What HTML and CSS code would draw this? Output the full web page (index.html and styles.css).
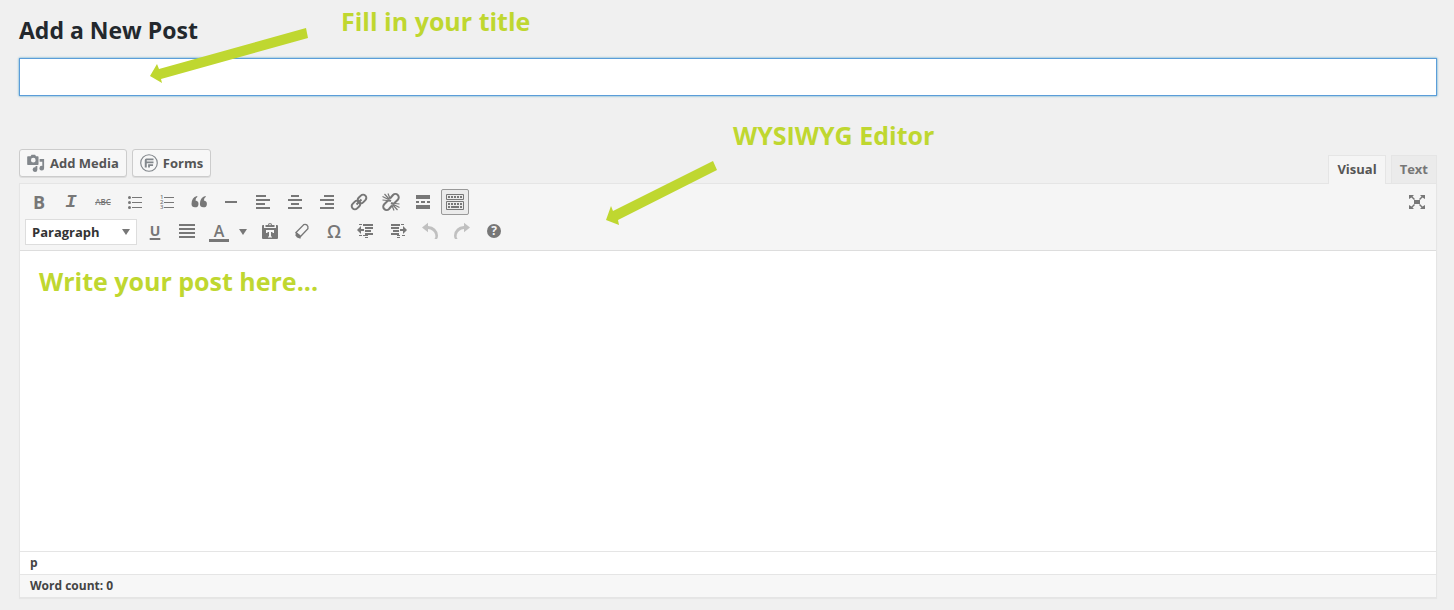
FILE: index.html
```html
<!DOCTYPE html>
<html lang="en">
<head>
<meta charset="utf-8">
<title>Add a New Post</title>
<link rel="stylesheet" href="styles.css">
</head>
<body>
<main class="page">
  <h1 class="page-title">Add a New Post</h1>
  <input class="title-input" type="text" aria-label="Post title">

  <div class="editor-tools">
    <div class="media-buttons">
      <button class="media-button" type="button">
        <svg class="media-icon" viewBox="0 0 20 20" aria-hidden="true"><path fill-rule="evenodd" d="M2.500 2.500h1.500l1-1.700h4l1 1.700h2q.8 0 .8.800v8q0 .8-.8.800H1q-.8 0-.8-.800v-8q0-.8.800-.800zM7 4.300a2.600 2.600 0 1 0 0 5.200 2.600 2.600 0 0 0 0-5.200z"/><path d="M14 5.500h5v10.300a2.600 2.600 0 1 1-2-2.500V8.500h-3zM11.500 13.300v4a2.600 2.600 0 1 1-2-2.500v-1.500z"/></svg>
        Add Media
      </button>
      <button class="media-button" type="button">
        <svg class="media-icon" viewBox="0 0 20 20" aria-hidden="true"><circle cx="10" cy="10" r="9.200" fill="none" stroke="currentColor" stroke-width="1.300"/><path d="M7 5h8v2H7.500v1.200H15v2H7.500V15H5.300V7q0-2 1.700-2zM9 11.300h5.500v1.900H11V15H9z"/></svg>
        Forms
      </button>
    </div>
    <div class="tabs">
      <button class="tab tab-active" type="button">Visual</button>
      <button class="tab" type="button">Text</button>
    </div>
  </div>

  <section class="editor">
    <div class="toolbar">
      <div class="toolbar-row">
        <button class="tool glyph-bold" type="button" aria-label="Bold">B</button>
        <button class="tool glyph-italic" type="button" aria-label="Italic">I</button>
        <button class="tool glyph-strike" type="button" aria-label="Strikethrough">ABC</button>
        <button class="tool" type="button" aria-label="Bulleted list"><svg viewBox="0 0 20 20"><path d="M7 5h10v1H7zM7 10h10v1H7zM7 15h10v1H7z"/><circle cx="4.500" cy="5.500" r="1.500"/><circle cx="4.500" cy="10.500" r="1.500"/><circle cx="4.500" cy="15.500" r="1.500"/></svg></button>
        <button class="tool" type="button" aria-label="Numbered list"><svg viewBox="0 0 20 20"><path d="M7 5h10v1H7zM7 10h10v1H7zM7 15h10v1H7z"/><g class="list-digits"><text x="3" y="7">1</text><text x="3" y="12">2</text><text x="3" y="17">3</text></g></svg></button>
        <button class="tool" type="button" aria-label="Blockquote"><svg viewBox="0 0 20 20"><path d="M8.500 4.700Q6.500 5.700 6.500 8.400a3.500 3.500 0 1 1-4 3.600Q2.500 5.500 8 4zM16.900 4.700q-2 1-2 3.700a3.500 3.500 0 1 1-4 3.600Q10.900 5.500 16.400 4z"/></svg></button>
        <button class="tool" type="button" aria-label="Horizontal line"><svg viewBox="0 0 20 20"><path d="M4 9h12v2H4z"/></svg></button>
        <button class="tool" type="button" aria-label="Align left"><svg viewBox="0 0 20 20"><path d="M3 3h10v2H3zM3 7h14v2H3zM3 11h9v2H3zM3 15h14v2H3z"/></svg></button>
        <button class="tool" type="button" aria-label="Align center"><svg viewBox="0 0 20 20"><path d="M6 3h8v2H6zM3 7h14v2H3zM6 11h8v2H6zM3 15h14v2H3z"/></svg></button>
        <button class="tool" type="button" aria-label="Align right"><svg viewBox="0 0 20 20"><path d="M7 3h10v2H7zM3 7h14v2H3zM8 11h9v2H8zM3 15h14v2H3z"/></svg></button>
        <button class="tool" type="button" aria-label="Insert link"><svg class="line" viewBox="0 0 20 20"><g transform="rotate(-45 10 10)"><rect x="1" y="6.800" width="9.500" height="6.400" rx="3.200"/><rect x="9.500" y="6.800" width="9.500" height="6.400" rx="3.200"/><path d="M6.500 10h7"/></g></svg></button>
        <button class="tool" type="button" aria-label="Remove link"><svg class="line" viewBox="0 0 20 20"><path d="M9 6.500 12 3a3.300 3.300 0 0 1 4.800 4.700L13.500 11q-1.500 1-3.500 0M11 13.500 8 17a3.300 3.300 0 0 1-4.800-4.700L6.500 9q1.500-1 3.500 0"/><path stroke-width="1.200" d="m1.500 4.500 6 3M3.500 2l5 5.500M7 1.500l2 5M1.500 8l4.500.5M18.500 15.500l-6-3M16.500 18l-5-5.500M13 18.500l-2-5M18.500 12l-4.500-.5"/></svg></button>
        <button class="tool" type="button" aria-label="Read more"><svg viewBox="0 0 20 20"><path d="M3 3h14v4H3zM3 9h3v2H3zM8 9h4v2H8zM14 9h3v2h-3zM3 13h14v4H3z"/></svg></button>
        <button class="tool tool-pressed" type="button" aria-label="Toolbar toggle" aria-pressed="true"><svg viewBox="0 0 20 20"><path fill="none" stroke="currentColor" d="M1.500 2.500h17v5h-17zM1.500 9.500h17v8h-17z"/><path fill="none" stroke="currentColor" stroke-width="2" stroke-dasharray="2 1" d="M3 5h14M3 12h14"/><path d="M3 14h2v2H3zM6 14h8v2H6zM15 14h2v2h-2z"/></svg></button>
        <button class="tool tool-end" type="button" aria-label="Fullscreen"><svg viewBox="0 0 20 20"><path d="M7 8h6v4H7zM2 3h5L5.500 4.500 8 7 7 8 4.500 5.500 2 7zM18 3h-5l1.500 1.500L12 7l1 1 2.500-2.500L18 7zM2 17h5l-1.500-1.500L8 13l-1-1-2.500 2.500L2 13zM18 17h-5l1.500-1.500L12 13l1-1 2.500 2.500L18 13z"/></svg></button>
      </div>
      <div class="toolbar-row">
        <span class="format">
          <select class="format-select" aria-label="Format"><option>Paragraph</option></select>
          <svg class="format-caret" viewBox="0 0 8 6" aria-hidden="true"><path d="M0 0h8L4 6z"/></svg>
        </span>
        <button class="tool glyph-underline" type="button" aria-label="Underline">U</button>
        <button class="tool" type="button" aria-label="Justify"><svg viewBox="0 0 20 20"><path d="M2 2h16v2H2zM2 6h16v2H2zM2 10h16v2H2zM2 14h16v2H2z"/></svg></button>
        <span class="color-group">
          <button class="tool glyph-color" type="button" aria-label="Text color">A</button>
          <button class="tool tool-caret" type="button" aria-label="Choose text color"><svg viewBox="0 0 8 6"><path d="M0 0h8L4 6z"/></svg></button>
        </span>
        <button class="tool" type="button" aria-label="Paste as text"><svg viewBox="0 0 20 20"><path fill-rule="evenodd" d="M3 3h1v3h12V3h1q1 0 1 1v12q0 1-1 1H3q-1 0-1-1V4q0-1 1-1zm3 5v3h1.500v-1H9v4.500H8v1h4v-1h-1V10h1.500v1H14V8z"/><path fill-rule="evenodd" d="M5.500 5V3H8a2 2 0 0 1 4 0h2.500v2zM10 1.800a.8.8 0 1 0 0 1.600.8.800 0 0 0 0-1.600z"/></svg></button>
        <button class="tool" type="button" aria-label="Clear formatting"><svg viewBox="0 0 20 20"><path fill="none" stroke="currentColor" stroke-width="1.300" d="m4 10.500 7.600-7.800q3.200-1 4.300 1.800v2.300l-7.600 8z"/><path d="m3.800 10 4.700 3.200v3.500L5 15.500l-1.500-2z"/></svg></button>
        <button class="tool glyph-omega" type="button" aria-label="Special character">Ω</button>
        <button class="tool" type="button" aria-label="Decrease indent"><svg viewBox="0 0 20 20"><path d="M3 2h3v1H3zM7 2h10v2H7zM9 5h8v2H9zM9 8h6v2H9zM9 11h8v2H9zM7 13h5v1H7zM3 13h3v1H3zM9 15h3v1H9zM1 8l4-4v3h3v2H5v3z"/></svg></button>
        <button class="tool" type="button" aria-label="Increase indent"><svg viewBox="0 0 20 20"><path d="M3 2h9v2H3zM13 2h3v1h-3zM3 5h8v2H3zM5 8h6v2H5zM3 11h8v2H3zM9 13h3v1H9zM14 13h3v1h-3zM9 15h3v1H9zM19 8l-4-4v3h-3v2h3v3z"/></svg></button>
        <button class="tool tool-disabled" type="button" aria-label="Undo" disabled><svg viewBox="0 0 20 20"><path d="M2 5.500 8 .8V4q9 .5 10 9.500 0 2-1 3.500h-2.500q1.500-2 .7-4.500Q13.500 7.500 8 7v3.200z"/></svg></button>
        <button class="tool tool-disabled" type="button" aria-label="Redo" disabled><svg viewBox="0 0 20 20"><path d="M18 5.500 12 .8V4Q3 4.500 2 13.500q0 2 1 3.500h2.500q-1.500-2-.7-4.500Q6.500 7.500 12 7v3.200z"/></svg></button>
        <button class="tool" type="button" aria-label="Keyboard shortcuts"><svg viewBox="0 0 20 20"><circle cx="10" cy="9" r="7"/><text class="help-mark" x="10" y="13">?</text></svg></button>
      </div>
    </div>
    <div class="content" contenteditable="true" role="textbox" aria-label="Post content"><p class="note">Write your post here...</p></div>
    <div class="path-row">p</div>
    <div class="status-row">Word count: 0</div>
  </section>

  <p class="note callout callout-title">Fill in your title</p>
  <svg class="callout arrow-title" viewBox="0 0 160 56" aria-hidden="true"><path d="M1 48 8 36l2 5L157 0l2 10L12 51l1 4z"/></svg>
  <p class="note callout callout-editor">WYSIWYG Editor</p>
  <svg class="callout arrow-editor" viewBox="0 0 112 65" aria-hidden="true"><path d="m0 60 5-14 2 5L107 1l4 9L12 60l1 5z"/></svg>
</main>
</body>
</html>
```

FILE: styles.css
```css
* {
  box-sizing: border-box;
}

body {
  margin: 0;
  background: #f0f0f0;
  color: #444;
  font: 700 13px/20px "Open Sans", sans-serif;
}

button,
select,
input {
  font: inherit;
  color: inherit;
}

svg {
  display: block;
  fill: currentColor;
}

.page {
  position: relative;
  padding: 14px 17px 12px 19px;
}

.page-title {
  margin: 0 0 12px;
  color: #23282d;
  font-size: 23px;
  line-height: 32px;
}

.title-input {
  display: block;
  width: 100%;
  height: 38px;
  padding: 4px 8px;
  border: 1px solid #5b9dd9;
  outline: 0;
  background: #fff;
  box-shadow: 0 0 2px rgba(30, 140, 190, 0.8);
  font-size: 20px;
}

.editor-tools {
  display: flex;
  justify-content: space-between;
  align-items: flex-end;
  margin-top: 53px;
}

.media-buttons {
  display: flex;
  gap: 5px;
  padding-bottom: 6px;
}

.media-button {
  display: flex;
  align-items: center;
  gap: 5px;
  height: 28px;
  padding: 0 7px;
  border: 1px solid #ccc;
  border-radius: 3px;
  background: #f7f7f7;
  box-shadow: 0 1px 0 #ddd;
  color: #555;
}

.media-icon {
  width: 18px;
  height: 18px;
  color: #82878c;
}

.tabs {
  display: flex;
  gap: 5px;
}

.tab {
  height: 28px;
  padding: 0 8px 2px;
  border: 1px solid #e5e5e5;
  border-bottom: 0;
  background: #ebebeb;
  color: #777;
}

.tab-active {
  z-index: 1;
  height: 29px;
  margin-bottom: -1px;
  background: #f5f5f5;
  color: #555;
}

.editor {
  border: 1px solid #e5e5e5;
  background: #fff;
  box-shadow: 0 1px 1px rgba(0, 0, 0, 0.04);
}

.toolbar {
  display: grid;
  gap: 4px;
  padding: 5px;
  border-bottom: 1px solid #ddd;
  background: #f5f5f5;
}

.toolbar-row {
  display: flex;
  align-items: center;
  gap: 4px;
}

.tool {
  display: flex;
  align-items: center;
  justify-content: center;
  width: 28px;
  height: 26px;
  padding: 0;
  border: 1px solid transparent;
  border-radius: 2px;
  background: none;
  color: #777;
}

.tool svg {
  flex: none;
  width: 20px;
  height: 20px;
}

.tool .line {
  fill: none;
  stroke: currentColor;
  stroke-width: 2;
}

.tool-pressed {
  border-color: #999;
  background: #ebebeb;
}

.tool-disabled {
  color: #c0c0c0;
}

.tool-end {
  margin-left: auto;
}

.color-group {
  display: flex;
}

.tool .tool-caret {
  width: 19px;
}

.tool-caret {
  width: 19px;
}

.tool-caret svg,
.format-caret {
  width: 8px;
  height: 6px;
}

.glyph-bold {
  font-size: 18px;
}

.glyph-italic {
  font: italic 700 19px "Liberation Mono", monospace;
}

.glyph-strike {
  font-size: 8px;
  font-weight: 600;
  text-decoration: line-through;
}

.glyph-underline {
  padding-bottom: 2px;
  font-size: 14px;
  text-decoration: underline 2px;
  text-underline-offset: 2px;
}

.glyph-color {
  padding-bottom: 2px;
  font-size: 16px;
  font-weight: 600;
}

.glyph-color::after {
  content: "";
  position: absolute;
  width: 20px;
  height: 3px;
  margin-top: 19px;
  background: currentColor;
}

.glyph-omega {
  padding-bottom: 2px;
  font-size: 18px;
  font-weight: 600;
}

.list-digits {
  font: 600 6px "Open Sans", sans-serif;
}

.help-mark {
  fill: #f5f5f5;
  font-size: 12px;
  text-anchor: middle;
}

.format {
  display: grid;
  align-items: center;
}

.format-select {
  grid-area: 1 / 1;
  width: 112px;
  height: 26px;
  padding: 0 6px;
  border: 1px solid #ddd;
  border-radius: 0;
  background: #fff;
  color: #333;
  appearance: none;
}

.format-caret {
  grid-area: 1 / 1;
  justify-self: end;
  margin-right: 7px;
  color: #777;
  pointer-events: none;
}

.content {
  min-height: 300px;
  padding: 13px 19px;
  outline: 0;
}

.note {
  margin: 0;
  color: #bfd730;
  font-size: 25px;
  font-weight: 700;
  line-height: 34px;
}

.path-row,
.status-row {
  padding: 1px 10px;
  border-top: 1px solid #e5e5e5;
  font-size: 12px;
}

.status-row {
  background: #f7f7f7;
}

.callout {
  position: absolute;
  pointer-events: none;
}

.callout-title {
  top: 4px;
  left: 341px;
}

.callout-editor {
  top: 118px;
  left: 733px;
}

.arrow-title {
  top: 28px;
  left: 149px;
  width: 160px;
  color: #bfd730;
}

.arrow-editor {
  top: 160px;
  left: 606px;
  width: 112px;
  color: #bfd730;
}
```
